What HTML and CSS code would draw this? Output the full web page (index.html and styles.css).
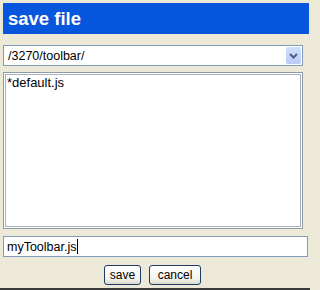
FILE: index.html
```html
<!DOCTYPE html>
<html>
<head>
<meta charset="utf-8">
<link rel="stylesheet" href="styles.css">
</head>
<body>
<div class="dialog">
  <div class="title">save file</div>
  <div class="select">
    <span class="select-text">/3270/toolbar/</span>
    <span class="drop">
      <svg width="9" height="6" viewBox="0 0 9 6"><path d="M1 1 L4.5 4.5 L8 1" fill="none" stroke="#4d6185" stroke-width="2"/></svg>
    </span>
  </div>
  <div class="listbox">
    <div class="item">*default.js</div>
  </div>
  <div class="textbox">myToolbar.js<span class="caret"></span></div>
  <div class="buttons">
    <button class="btn btn-save">save</button>
    <button class="btn btn-cancel">cancel</button>
  </div>
  <div class="edge"></div>
</div>
</body>
</html>
```
FILE: styles.css
```css
html, body {
  margin: 0;
  padding: 0;
  background: #ece9d8;
}
body {
  font-family: "Liberation Sans", Arial, sans-serif;
  width: 310px;
  height: 290px;
  overflow: hidden;
}
.dialog {
  height: 290px;
  display: flex;
  flex-direction: column;
  padding: 3px 1px 0 3px;
  box-sizing: border-box;
}
.title {
  height: 31px;
  width: 306px;
  background: #0856dd;
  color: #fff;
  font-weight: bold;
  font-size: 18.5px;
  display: flex;
  align-items: center;
  padding-left: 5px;
  box-sizing: border-box;
}
.select {
  margin-top: 11px;
  width: 300px;
  height: 21px;
  border: 1px solid #7f9db9;
  background: #fff;
  box-sizing: border-box;
  display: flex;
  align-items: center;
  justify-content: space-between;
  padding-left: 4px;
  padding-right: 1px;
  font-size: 12.5px;
  color: #000;
}
.drop {
  width: 15px;
  height: 17px;
  background: linear-gradient(#d3defb, #b9cbf6);
  border-radius: 2px;
  display: flex;
  align-items: center;
  justify-content: center;
}
.drop svg {
  display: block;
}
.listbox {
  margin-top: 6px;
  width: 300px;
  height: 157px;
  border: 1px solid #8e9aa6;
  box-shadow: inset 0 0 0 1px #fff, inset 0 0 0 2px #a9b2bb;
  background: #fff;
  box-sizing: border-box;
  padding: 2px 3px;
}
.item {
  font-size: 13px;
  line-height: 15px;
  color: #000;
}
.textbox {
  margin-top: 7px;
  width: 305px;
  height: 21px;
  border: 1px solid #7f9db9;
  background: #fff;
  box-sizing: border-box;
  font-size: 12.5px;
  color: #000;
  display: flex;
  align-items: center;
  padding-left: 3px;
}
.caret {
  display: inline-block;
  width: 1px;
  height: 15px;
  background: #000;
  margin-left: 1px;
}
.buttons {
  margin-top: 8px;
  display: flex;
  justify-content: center;
  gap: 8px;
  width: 299px;
}
.btn {
  height: 20px;
  border: 1px solid #1f3b63;
  border-radius: 3px;
  background: linear-gradient(#ffffff, #f4f3ee 70%, #dcd8cc);
  font-family: "Liberation Sans", Arial, sans-serif;
  font-size: 12px;
  color: #000;
  padding: 0;
  margin: 0;
}
.btn-save { width: 37px; }
.btn-cancel { width: 52px; }
.edge {
  margin-top: auto;
  margin-left: -3px;
  margin-right: -1px;
  height: 2px;
  background: #3a3a3a;
}
```
